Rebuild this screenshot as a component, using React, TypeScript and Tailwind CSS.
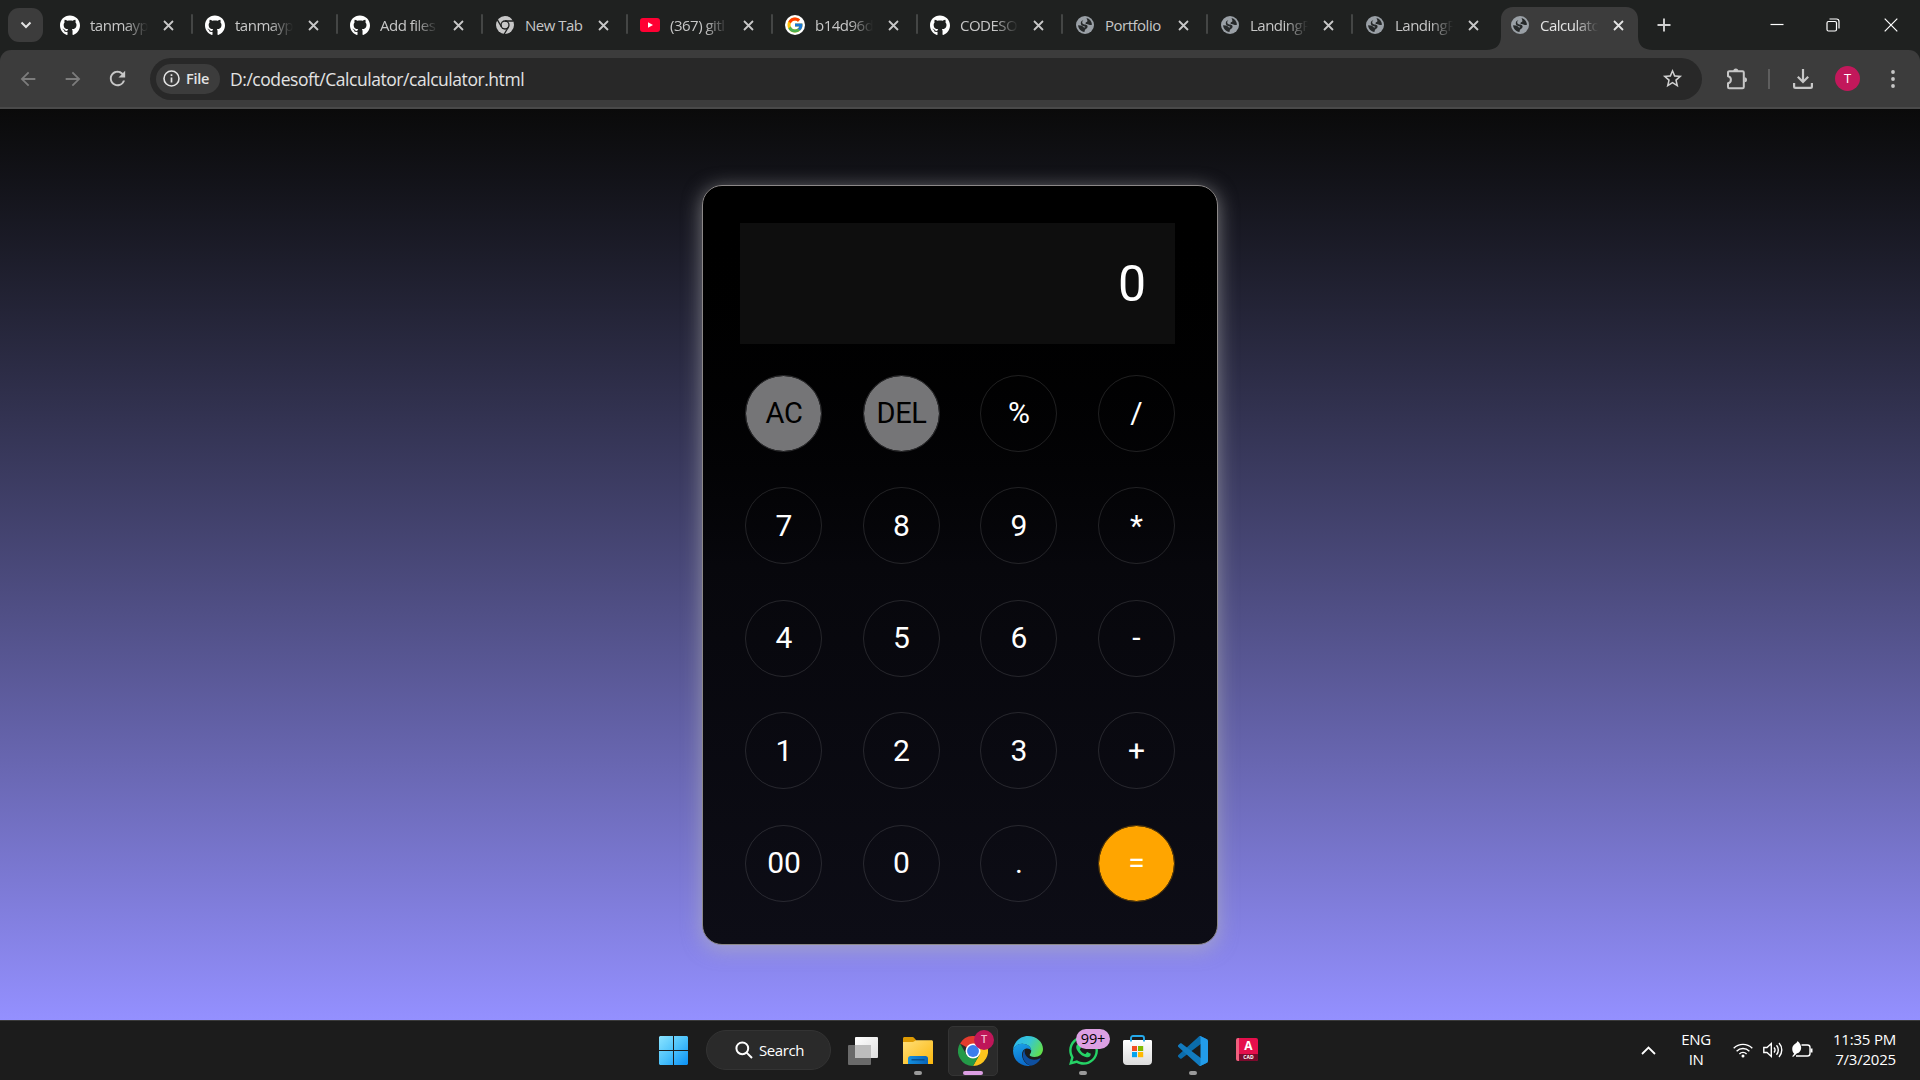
import React from "react";
import { FaGithub, FaWhatsapp } from "react-icons/fa";
import { FcGoogle } from "react-icons/fc";
import { MdArrowBack, MdArrowForward, MdRefresh, MdStarBorder } from "react-icons/md";

function GlobeIcon() {
  return (
    <svg width="18" height="18" viewBox="0 0 18 18">
      <circle cx="9" cy="9" r="9" fill="#9aa0a6" />
      <path
        d="M10.500 2.100c3.100.7 5.200 3.300 5.500 6.300-.8.900-2 .9-2.900.3-.9-.7-2.300-.2-3.200-.8-.8-.7-.3-1.700.8-1.900 1.100-.3.900-1.300-.2-3.900zM7.500 4c-1.200 1-1.700 2.300-1 3.400.8 1.100 2.400.8 3.600 1.300 1.500.6 2 2 1 3.200-.7.900-1.800 1.100-2.200 2.100-.2.700-.2 1.300-.5 2C4.900 15.600 2.300 12.700 2.100 9.300l2.800.2c1.500.2 2 1.200 3 1.900.6.400 1.300.2 1.300-.3 0-.7-.9-.9-2.100-1.200-1.700-.4-2.600-1.600-2.300-3.200.2-1.200 1.300-2.400 2.700-2.700z"
        fill="#26292a"
      />
    </svg>
  );
}

function YoutubeIcon() {
  return (
    <svg width="20" height="14" viewBox="0 0 20 14">
      <rect width="20" height="14" rx="3" fill="#ff0033" />
      <path d="M8 4.200l5 2.800-5 2.800z" fill="#fff" />
    </svg>
  );
}

function ChromeMono() {
  return (
    <svg width="18" height="18" viewBox="0 0 24 24">
      <circle cx="12" cy="12" r="12" fill="#c7c7c7" />
      <circle cx="12" cy="12" r="6.200" fill="#1f2120" />
      <circle cx="12" cy="12" r="4.400" fill="#c7c7c7" />
      <path d="M12 6.700h11M7.400 14.700L1.900 5.200M16.600 14.700L11 24" stroke="#1f2120" strokeWidth="1.800" fill="none" />
    </svg>
  );
}

function GoogleBadge() {
  return (
    <span className="flex size-5 items-center justify-center rounded-full bg-white">
      <FcGoogle size={18} />
    </span>
  );
}

function PuzzleIcon() {
  return (
    <svg width="22" height="22" viewBox="0 0 22 22" className="ml-[24px] shrink-0" fill="none" stroke="#c7c7c7" strokeWidth="2">
      <path
        d="M2 4.500C2 3.700 2.600 3.200 3.300 3.200H16.500c.8 0 1.300.5 1.300 1.300V19c0 .8-.5 1.300-1.300 1.300H3.300C2.600 20.300 2 19.800 2 19v-3.700c1.700-.3 2.900-1.700 2.900-3.500S3.700 8.600 2 8.300z"
        strokeLinejoin="round"
      />
      <path d="M7.300 3a2.500 2.500 0 0 1 5 0zM18.500 9.300a2.500 2.500 0 0 1 0 5z" fill="#c7c7c7" stroke="none" />
    </svg>
  );
}

function CloseGlyph({ color }: { color: string }) {
  return (
    <svg width="11" height="11" viewBox="0 0 11 11" className="shrink-0">
      <path d="M1 1l9 9M10 1l-9 9" stroke={color} strokeWidth="1.800" />
    </svg>
  );
}

type TabInfo = { icon: React.ReactNode; title: string; active?: boolean; divider?: boolean };

const github = <FaGithub size={21} color="#fff" />;

const tabs: TabInfo[] = [
  { icon: github, title: "tanmayp", divider: true },
  { icon: github, title: "tanmayp", divider: true },
  { icon: github, title: "Add files", divider: true },
  { icon: <ChromeMono />, title: "New Tab", divider: true },
  { icon: <YoutubeIcon />, title: "(367) gitl", divider: true },
  { icon: <GoogleBadge />, title: "b14d96d", divider: true },
  { icon: github, title: "CODESO", divider: true },
  { icon: <GlobeIcon />, title: "Portfolio", divider: true },
  { icon: <GlobeIcon />, title: "LandingP", divider: true },
  { icon: <GlobeIcon />, title: "LandingP" },
  { icon: <GlobeIcon />, title: "Calculato", active: true },
];

function Tab({ icon, title, active, divider }: TabInfo) {
  const short = title === "New Tab" || title === "Portfolio";
  return (
    <div className="relative flex h-full w-[145px] shrink-0 items-center pl-[13px]">
      {active && (
        <svg className="absolute top-[7px] -left-[11px]" width="167" height="43" viewBox="0 0 167 43">
          <path d="M0 43c10 0 15-5 15-14V12C15 5 20 0 27 0h113c7 0 12 5 12 12v17c0 9 5 14 15 14z" fill="#3c3c3c" />
        </svg>
      )}
      <span className="relative flex size-5 shrink-0 items-center justify-center">{icon}</span>
      <span
        className={
          "relative ml-[10px] w-[60px] shrink-0 text-[15px] leading-5 tracking-[-0.5px] whitespace-nowrap " +
          (active ? "text-[#e3e3e3] " : "text-[#c7c7c7] ") +
          (short ? "" : "[mask-image:linear-gradient(to_right,black_58%,transparent_97%)]")
        }
      >
        {title}
      </span>
      <span className="relative ml-[13px] flex">
        <CloseGlyph color={active ? "#e3e3e3" : "#c7c7c7"} />
      </span>
      {divider && <span className="absolute top-[14px] -right-px h-5 w-[2px] rounded-full bg-[#444645]" />}
    </div>
  );
}

function TabStrip() {
  return (
    <div className="flex h-[50px] items-center bg-[#1f2120] pl-2">
      <div className="flex h-[34px] w-[35px] shrink-0 items-center justify-center rounded-[11px] bg-[#3c3c3c]">
        <svg width="12" height="8" viewBox="0 0 12 8">
          <path d="M1.500 1.500L6 6l4.500-4.500" stroke="#e3e3e3" strokeWidth="2" fill="none" />
        </svg>
      </div>
      <div className="ml-1 flex h-full">
        {tabs.map((t, i) => (
          <Tab key={i} {...t} />
        ))}
      </div>
      <svg className="ml-[15px] shrink-0" width="14" height="14" viewBox="0 0 14 14">
        <path d="M7 .5v13M.5 7h13" stroke="#d0d0d0" strokeWidth="1.900" />
      </svg>
      <div className="ml-auto flex h-full items-center pr-[22px] pb-px">
        <svg width="14" height="14" viewBox="0 0 14 14" className="mr-[42px]">
          <path d="M.5 6.500h13" stroke="#fff" strokeWidth="1.200" />
        </svg>
        <svg width="14" height="14" viewBox="0 0 14 14" className="mr-[44px]" fill="none" stroke="#fff" strokeWidth="1.200">
          <rect x="1" y="3.500" width="9.500" height="9.500" rx="1.500" />
          <path d="M3.500 1h7C12 1 13 2 13 3.500v7" />
        </svg>
        <svg width="14" height="14" viewBox="0 0 14 14">
          <path d="M.7.700l12.600 12.600M13.300.700L.7 13.300" stroke="#fff" strokeWidth="1.200" />
        </svg>
      </div>
    </div>
  );
}

function Toolbar() {
  return (
    <div className="bg-[#1f2120]">
      <div className="flex h-[59px] items-center rounded-t-[11px] border-b-2 border-[#4a4a4a] bg-[#3c3c3c] pl-[17px]">
        <MdArrowBack size={22} color="#7c7c7c" />
        <MdArrowForward size={22} color="#7c7c7c" className="ml-[23px]" />
        <MdRefresh size={23} color="#c7c7c7" className="ml-[22px]" />
        <div className="ml-[21px] flex h-[42px] w-[1552px] items-center rounded-full bg-[#282828] pl-[6px]">
          <div className="flex h-[30px] w-[64px] items-center rounded-full bg-[#3c3c3c] pl-[7px]">
            <svg width="17" height="17" viewBox="0 0 17 17" className="shrink-0">
              <circle cx="8.500" cy="8.500" r="7.500" stroke="#e3e3e3" strokeWidth="1.600" fill="none" />
              <path d="M8.500 7.500v5M8.500 4.300v1.800" stroke="#e3e3e3" strokeWidth="1.700" />
            </svg>
            <span className="ml-[6px] text-[14.500px] leading-5 font-semibold tracking-[-0.3px] text-[#e3e3e3]">File</span>
          </div>
          <span className="ml-[10px] pt-px text-[17.500px] leading-6 tracking-[-0.450px] whitespace-nowrap text-[#e3e3e3]">
            D:/codesoft/Calculator/calculator.html
          </span>
          <MdStarBorder size={23} color="#d0d0d0" className="mr-[18px] ml-auto" />
        </div>
        <PuzzleIcon />
        <span className="ml-[20px] h-5 w-[2px] bg-[#5e5e5e]" />
        <svg width="20" height="20" viewBox="0 0 20 20" className="ml-[23px] shrink-0" fill="none" stroke="#c7c7c7" strokeWidth="2.200">
          <path d="M10 0v12.500M4.800 7.800L10 13l5.200-5.200M1.100 14v3.500c0 1 .6 1.400 1.400 1.400h15c.8 0 1.400-.4 1.400-1.400V14" />
        </svg>
        <span className="ml-[22px] flex size-[25px] shrink-0 items-center justify-center rounded-full bg-[#c2185b] text-[13px] text-white">
          T
        </span>
        <svg width="4" height="18" viewBox="0 0 4 18" className="ml-[31px] shrink-0" fill="#c7c7c7">
          <circle cx="2" cy="2" r="1.900" />
          <circle cx="2" cy="9" r="1.900" />
          <circle cx="2" cy="16" r="1.900" />
        </svg>
      </div>
    </div>
  );
}

const keys = ["AC", "DEL", "%", "/", "7", "8", "9", "*", "4", "5", "6", "-", "1", "2", "3", "+", "00", "0", ".", "="];

function keyClass(k: string) {
  if (k === "AC" || k === "DEL") return "border-[#2c2c2e] bg-[#757577] text-black text-[29px] tracking-[-0.4px]";
  if (k === "=") return "border-[#5a3c08] bg-[#ffa500] text-white text-[30px]";
  return "border-white/12 text-white text-[30px]";
}

function Calculator() {
  return (
    <main className="flex h-[911px] items-center justify-center bg-linear-to-b from-[#0a0a0a] to-[#9490ff] font-['Roboto',sans-serif]">
      <div className="mt-px h-[760px] w-[516px] rounded-[20px] border border-[#8c8888] bg-linear-to-b from-black via-[#07070c] to-[#0d0d16] pt-[37px] pl-[37px] shadow-[0_3.750px_18.750px_rgba(185,185,185,0.6)]">
        <div className="flex h-[121px] w-[435px] items-center justify-end bg-white/[0.055] pr-[29px] text-[50px] leading-none text-white">
          <span className="pt-px">0</span>
        </div>
        <div className="mt-[30.500px] ml-[5px] grid w-[430px] grid-cols-[repeat(4,77px)] gap-x-[40.500px] gap-y-[35.500px]">
          {keys.map((k) => (
            <button
              key={k}
              className={"flex size-[77px] items-center justify-center rounded-full border bg-clip-padding pl-px leading-none " + keyClass(k)}
            >
              {k}
            </button>
          ))}
        </div>
      </div>
    </main>
  );
}

function WindowsIcon() {
  return (
    <svg width="29" height="29" viewBox="0 0 29 29">
      <defs>
        <linearGradient id="win" x1="0" y1="0" x2="1" y2="1">
          <stop offset="0" stopColor="#8be4ff" />
          <stop offset=".5" stopColor="#4cc2fb" />
          <stop offset="1" stopColor="#0a90f5" />
        </linearGradient>
      </defs>
      <path d="M1 0h13v14H0V1zM15 0h13l1 1v13H15zM0 15h14v14H1l-1-1zM15 15h14v13l-1 1H15z" fill="url(#win)" />
    </svg>
  );
}

function TaskViewIcon() {
  return (
    <svg width="30" height="28" viewBox="0 0 30 28">
      <defs>
        <linearGradient id="tv" x1="0" y1="0" x2="1" y2="1">
          <stop offset="0" stopColor="#fff" />
          <stop offset="1" stopColor="#dedede" />
        </linearGradient>
      </defs>
      <rect x="7" y="0" width="23" height="21" rx="1" fill="url(#tv)" />
      <rect x="0" y="8" width="23" height="20" rx="1" fill="#6a6a6a" />
      <rect x="7" y="8" width="16" height="13" fill="#bdbdbd" />
    </svg>
  );
}

function FolderIcon() {
  return (
    <svg width="30" height="28" viewBox="0 0 30 28">
      <defs>
        <linearGradient id="fold" x1="0" y1="0" x2="1" y2="1">
          <stop offset="0" stopColor="#ffdf79" />
          <stop offset="1" stopColor="#fbb70c" />
        </linearGradient>
        <linearGradient id="foldb" x1="0" y1="0" x2="1" y2="0">
          <stop offset="0" stopColor="#1490df" />
          <stop offset="1" stopColor="#0a64b8" />
        </linearGradient>
      </defs>
      <path d="M0 1.500C0 .6.600 0 1.500 0H9c1 0 1.600.3 2.200 1L13 3v5H0z" fill="#dd9a03" />
      <path d="M0 5h10l3-1.800h15.500c.9 0 1.500.6 1.500 1.500V27H0z" fill="url(#fold)" />
      <path d="M5 27v-5.500c0-1.400 1-2.500 2.500-2.500h15c1.500 0 2.500 1.100 2.500 2.500V27z" fill="url(#foldb)" />
      <path d="M8.500 22.800h13" stroke="#07477f" strokeWidth="1.200" />
    </svg>
  );
}

function ChromeIcon() {
  return (
    <svg width="30" height="30" viewBox="0 0 48 48">
      <path d="M24 24L3.200 12A24 24 0 0 1 44.800 12z" fill="#e33b2e" />
      <path d="M44.800 12A24 24 0 0 1 24 48l10.400-18L34.400 18 24 12z" fill="#fcc41d" />
      <path d="M24 48A24 24 0 0 1 3.200 12l10.400 18L24 36l10.400-6z" fill="#249a48" />
      <circle cx="24" cy="24" r="12" fill="#fff" />
      <circle cx="24" cy="24" r="9.500" fill="#3b7ded" />
    </svg>
  );
}

function EdgeIcon() {
  return (
    <svg width="30" height="30" viewBox="0 0 30 30">
      <defs>
        <linearGradient id="e1" x1="0" y1="0.200" x2="1" y2="0.600">
          <stop offset="0" stopColor="#2bb6ee" />
          <stop offset=".5" stopColor="#37c6d4" />
          <stop offset="1" stopColor="#62df4c" />
        </linearGradient>
        <linearGradient id="e2" x1="0" y1="0" x2="0.300" y2="1">
          <stop offset="0" stopColor="#1aa3e8" />
          <stop offset="1" stopColor="#0b6ccc" />
        </linearGradient>
      </defs>
      <path d="M0 14C1 5.500 7.500 0 15 0c8.500 0 15 6 15 13 0 5-3.700 8-8.500 8-3.500 0-5-1.300-4.800-2.200.3-1 1.500-1.400 1.500-4 0-4-4-7-9-7C5 7.800 1.500 10 0 14z" fill="url(#e1)" />
      <path d="M0 14.500C1 10 5 7.800 9.300 7.800c5.200 0 9 3 9 7-1-1.500-2.300-2.200-4-2.200-4 0-6 4-5 8.500 1 4.400 4.500 7.700 8.200 8.600C8.500 31.200 0 25 0 14.500z" fill="url(#e2)" />
      <path d="M11.800 13.500c-4.300 4.500-1.500 14 6 16.200 4-.6 7.600-3.200 9.600-6.500.4-.8 0-1.200-.8-.8-7.600 3.800-16.300-1.300-14.800-8.900z" fill="#0e4f9f" />
    </svg>
  );
}

function StoreIcon() {
  return (
    <svg width="29" height="30" viewBox="0 0 29 30">
      <defs>
        <linearGradient id="st" x1="0" y1="0" x2="0" y2="1">
          <stop offset="0" stopColor="#fff" />
          <stop offset="1" stopColor="#dcdcdc" />
        </linearGradient>
      </defs>
      <path d="M0 6.500C0 5.500.5 5 1.500 5h26c1 0 1.500.5 1.500 1.500V26c0 2.500-1.500 4-4 4H4c-2.500 0-4-1.500-4-4z" fill="url(#st)" />
      <path d="M8 6.500V3c0-1.200.8-2 2-2h9c1.200 0 2 .8 2 2v3.500" stroke="#25a9ea" strokeWidth="1.900" fill="none" />
      <path d="M9 11h5v5H9z" fill="#f04e23" />
      <path d="M15 11h5.200v5H15z" fill="#7fb900" />
      <path d="M9 17h5v5.200H9z" fill="#03a4ef" />
      <path d="M15 17h5.200v5.200H15z" fill="#ffb902" />
    </svg>
  );
}

function VsCodeIcon() {
  return (
    <svg width="30" height="30" viewBox="0 0 100 100">
      <path d="M96.500 10.800L75.900.900c-2.400-1.200-5.200-.7-7.100 1.200L1.300 63.600c-1.800 1.700-1.800 4.500 0 6.100l5.500 5c1.500 1.400 3.700 1.500 5.300.2L93.400 13.300c2.700-2.100 6.600-.1 6.600 3.300v-.2c0-2.500-1.400-4.600-3.500-5.600z" fill="#0b6cab" />
      <path d="M96.500 89.200l-20.600 9.900c-2.400 1.200-5.200.7-7.100-1.200L1.300 36.400c-1.800-1.700-1.800-4.500 0-6.100l5.500-5c1.500-1.400 3.700-1.500 5.300-.2l81.300 61.600c2.700 2.100 6.600.1 6.600-3.300v.2c0 2.500-1.400 4.600-3.500 5.600z" fill="#127bbf" />
      <path d="M75.900 99.100c-2.400 1.200-5.200.7-7.100-1.200 2.300 2.300 6.200.7 6.200-2.600V4.700c0-3.300-3.900-4.900-6.200-2.600 1.900-1.900 4.700-2.400 7.100-1.200l20.600 9.900c2.100 1 3.500 3.200 3.500 5.600v67.200c0 2.400-1.400 4.600-3.500 5.600z" fill="#229cea" />
    </svg>
  );
}

function AutoCadIcon() {
  return (
    <div className="mr-[2px] mb-[2px] flex h-[23px] w-[22px] flex-col overflow-hidden rounded-[2px] border-l-[3px] border-[#f0607e] bg-[#e50f4c] text-center text-white">
      <span className="h-4 text-[12px] leading-4 font-bold">A</span>
      <span className="h-[7px] bg-[#7a0a2c] text-[5px] leading-[6px] font-bold">CAD</span>
    </div>
  );
}

function TaskItem({ children, running, active }: { children: React.ReactNode; running?: boolean; active?: boolean }) {
  return (
    <div
      className={
        "relative flex size-[50px] shrink-0 items-center justify-center rounded-[5px] " +
        (active ? "border border-[#343434] bg-[#2a2a2a]" : "")
      }
    >
      {children}
      {running && <span className="absolute bottom-px left-[21px] h-1 w-2 rounded-full bg-[#9a9a9a]" />}
      {active && <span className="absolute bottom-0 left-[14px] h-1 w-5 rounded-full bg-[#dc9fe3]" />}
    </div>
  );
}

function Tray() {
  return (
    <div className="ml-auto flex items-center pr-[24px] text-[15px] leading-[20px] text-white">
      <svg width="15" height="9" viewBox="0 0 15 9">
        <path d="M1 8l6.500-6.500L14 8" stroke="#fff" strokeWidth="1.800" fill="none" />
      </svg>
      <div className="mb-[3px] ml-[22px] flex w-[36px] flex-col text-center tracking-[-0.4px]">
        <span>ENG</span>
        <span>IN</span>
      </div>
      <svg width="20" height="15" viewBox="0 0 20 15" className="mb-px ml-[19px]" fill="none" stroke="#fff" strokeWidth="1.400">
        <path d="M.7 5.300c5.200-5.200 13.400-5.200 18.600 0M3.600 8.200c3.600-3.600 9.200-3.600 12.800 0M6.400 10.900c2-2 5.200-2 7.200 0" />
        <circle cx="10" cy="13" r="1.500" fill="#fff" stroke="none" />
      </svg>
      <svg width="20" height="18" viewBox="0 0 20 18" className="mb-px ml-[10px]" fill="none" stroke="#fff" strokeWidth="1.400">
        <path d="M.8 6.500h3.200L8.300 2.500v13L4 11.500H.8zM11 6.500c1.200 1.400 1.200 3.600 0 5M13.500 4.300c2.400 2.700 2.400 6.700 0 9.400M16 2c3.700 4 3.700 10 0 14" />
      </svg>
      <svg width="21" height="17" viewBox="0 0 21 17" className="mb-[3px] ml-[9px]" fill="none">
        <path d="M9.500 4h6c1.400 0 2.500 1 2.500 2.500v6c0 1.500-1.100 2.500-2.500 2.500H4" stroke="#fff" strokeWidth="1.400" />
        <path d="M18.500 7.500h2v4h-2z" fill="#fff" />
        <path d="M5.500 0c3.500 3 4.500 6.500 3 9.500-.8 1.600-2 2.500-3.500 2.800L1 16l-.8-.8 2-2.400C-.7 10-.2 5 2.500 3.200 4 2.300 5.200 1.500 5.500 0z" fill="#fff" />
      </svg>
      <div className="mb-[3px] ml-[17px] flex w-[66px] flex-col items-end tracking-[-0.2px] whitespace-nowrap">
        <span>11:35 PM</span>
        <span>7/3/2025</span>
      </div>
    </div>
  );
}

function Taskbar() {
  return (
    <footer className="flex h-[60px] items-center border-t border-[#3a3a3a] bg-[#1c1c1c]">
      <div className="ml-[648px] flex items-center gap-[5px]">
        <TaskItem>
          <WindowsIcon />
        </TaskItem>
        <div className="mb-px ml-[3px] flex h-10 w-[125px] shrink-0 items-center rounded-full border border-[#333] bg-[#2a2a2a] pl-[28px]">
          <svg width="18" height="18" viewBox="0 0 18 18" fill="none" stroke="#fff" strokeWidth="2">
            <circle cx="7.300" cy="7.300" r="5.900" />
            <path d="M11.600 11.600l5.400 5.400" />
          </svg>
          <span className="ml-[6px] text-[15px] tracking-[-0.4px] text-white">Search</span>
        </div>
        <div className="ml-[2px] flex gap-[5px]">
          <TaskItem>
            <TaskViewIcon />
          </TaskItem>
          <TaskItem running>
            <FolderIcon />
          </TaskItem>
          <TaskItem active>
            <ChromeIcon />
            <span className="absolute top-[3px] right-[3px] flex size-5 items-center justify-center rounded-full bg-[#bf1659] text-[11px] font-semibold text-[#f2b8cf]">
              T
            </span>
          </TaskItem>
          <TaskItem>
            <EdgeIcon />
          </TaskItem>
          <TaskItem running>
            <FaWhatsapp size={33} color="#25d366" />
            <span className="absolute top-[3px] left-[18px] flex h-5 w-[34px] items-center justify-center rounded-full bg-[#dc9fe3] text-[14.500px] tracking-[-0.2px] text-black">
              99+
            </span>
          </TaskItem>
          <TaskItem>
            <span className="mr-[2px] mb-px">
              <StoreIcon />
            </span>
          </TaskItem>
          <TaskItem running>
            <VsCodeIcon />
          </TaskItem>
          <TaskItem>
            <AutoCadIcon />
          </TaskItem>
        </div>
      </div>
      <Tray />
    </footer>
  );
}

export default function App() {
  return (
    <div className="h-[1080px] w-[1920px] overflow-hidden bg-[#1c1c1c] font-['Open_Sans','Noto_Sans',sans-serif]">
      <TabStrip />
      <Toolbar />
      <Calculator />
      <Taskbar />
    </div>
  );
}
